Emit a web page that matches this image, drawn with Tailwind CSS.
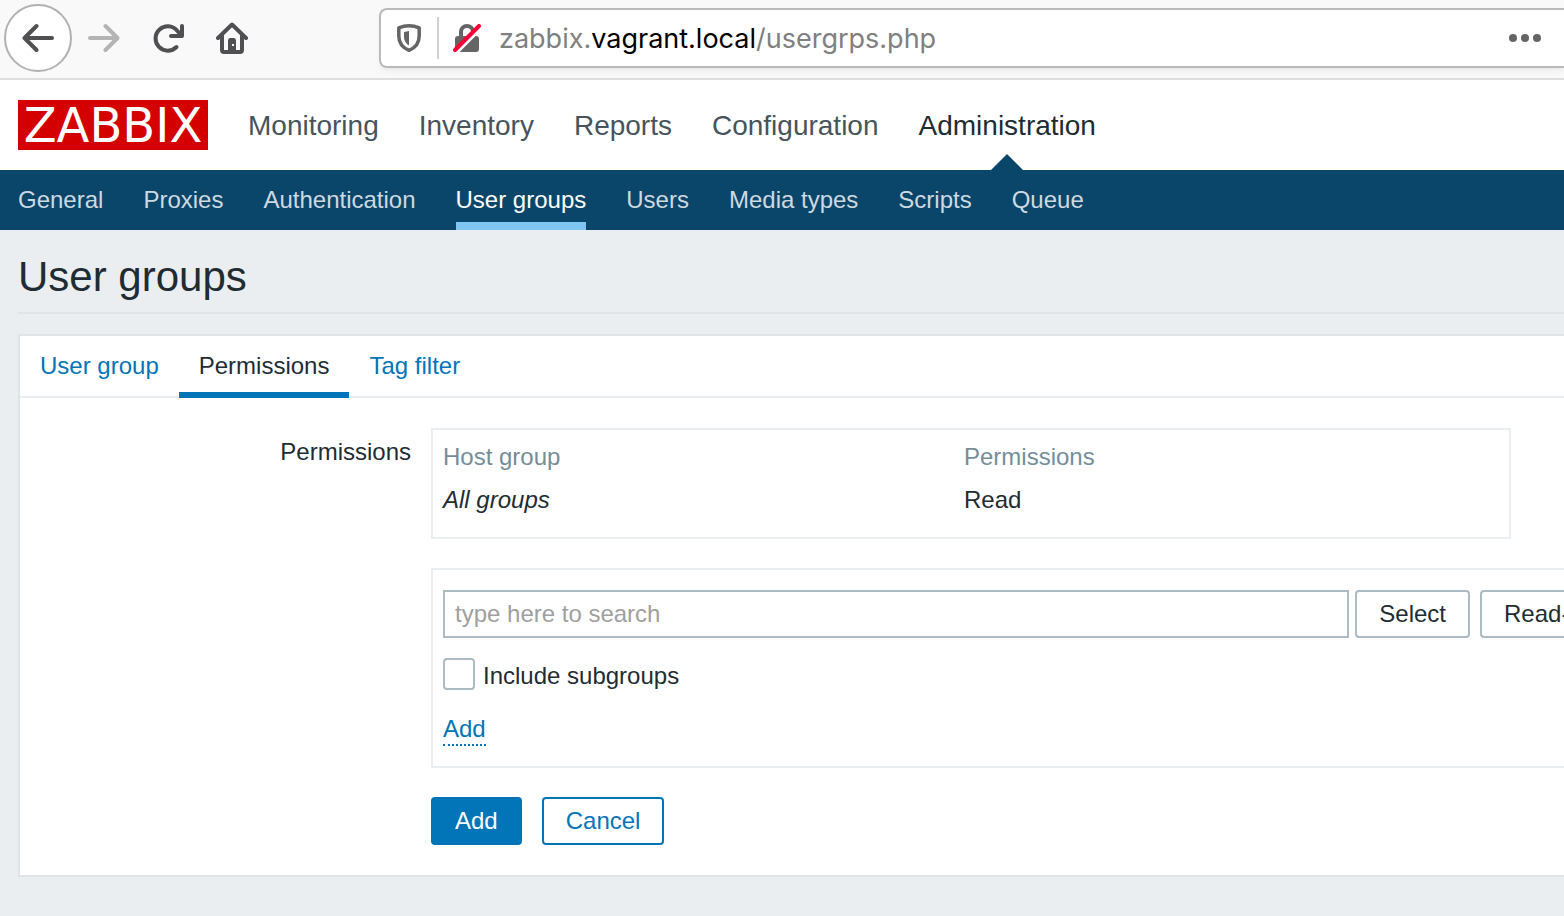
<!DOCTYPE html>
<html lang="en">
<head>
<meta charset="utf-8">
<meta name="viewport" content="width=device-width, initial-scale=1">
<title>User groups</title>
<script src="https://cdn.jsdelivr.net/npm/@tailwindcss/browser@4"></script>
</head>
<body class="min-h-screen overflow-x-hidden bg-[#ebeef0] font-['Liberation_Sans',Arial,sans-serif] text-2xl leading-7 text-[#1f2c33]">

<!-- Browser toolbar -->
<div class="flex h-20 border-b-2 border-[#dedede] bg-[#f9f9fa] pt-1 pl-1">
  <button type="button" aria-label="Back" class="flex size-17 shrink-0 items-center justify-center rounded-full border-2 border-[#b1b1b3] bg-white">
    <svg class="size-8" viewBox="0 0 32 32" fill="none" stroke="#505052" stroke-width="4" stroke-linecap="round" stroke-linejoin="round"><path d="M30 16H3M14.500 4L2.500 16L14.500 28"/></svg>
  </button>
  <button type="button" aria-label="Forward" class="ml-4 flex h-17 w-8 shrink-0 items-center justify-center">
    <svg class="size-8" viewBox="0 0 32 32" fill="none" stroke="#b4b4b5" stroke-width="4" stroke-linecap="round" stroke-linejoin="round"><path d="M2 16H29M17.500 4L29.500 16L17.500 28"/></svg>
  </button>
  <button type="button" aria-label="Reload" class="ml-8 flex h-17 w-8 shrink-0 items-center justify-center">
    <svg class="size-8" viewBox="0 0 32 32" fill="none" stroke="#505052" stroke-width="4" stroke-linecap="round" stroke-linejoin="round"><path d="M24.500 25A12.200 12.200 0 1 1 25 8.500L29 13"/><path d="M30 4V14H19"/></svg>
  </button>
  <button type="button" aria-label="Home" class="ml-8 flex h-17 w-8 shrink-0 items-center justify-center">
    <svg class="size-8" viewBox="0 0 32 32" fill="none" stroke="#505052" stroke-width="4" stroke-linecap="round" stroke-linejoin="round"><path d="M2 16L16 2.500L30 16"/><path d="M6 14V28Q6 30 8 30H24Q26 30 26 28V14"/><path fill="#505052" stroke="none" fill-rule="evenodd" d="M12 30V18.500Q12 16 14 16H18Q20 16 20 18.500V30ZM16 22V24H18V22Z"/></svg>
  </button>
  <div class="mt-1 ml-[131px] flex h-15 min-w-0 flex-1 items-center rounded-l-lg border-2 border-r-0 border-[#bababb] bg-white pl-4 shadow-md shadow-black/5">
    <svg class="h-7 w-6 shrink-0" viewBox="0 0 24 28"><path d="M12 1.800C15.500 1.800 19 2.500 22.200 3.800V12C22.200 18.500 19 23.500 12 26.300C5 23.500 1.800 18.500 1.800 12V3.800C5 2.500 8.500 1.800 12 1.800Z" fill="none" stroke="#656566" stroke-width="3.500" stroke-linejoin="round"/><path d="M12 7L7 8V13C7 17 9 19.500 12 21.500Z" fill="#656566"/></svg>
    <span class="ml-4 h-[42px] w-0.5 shrink-0 bg-[#d0d0d1]"></span>
    <svg class="ml-3.5 size-7 shrink-0" viewBox="0 0 28 28"><path d="M8 13V8A6 6 0 0 1 20 8V13" fill="none" stroke="#656566" stroke-width="4"/><rect x="2" y="12" width="24" height="16" rx="3" fill="#656566"/><path d="M2.500 30L30 2.500" stroke="#fff" stroke-width="3"/><path d="M2 26L26 2" stroke="#ff0039" stroke-width="4" stroke-linecap="round"/></svg>
    <div class="ml-4.5 min-w-0 flex-1 truncate pt-0.5 font-[Inter,sans-serif] text-[27px] leading-9 text-[#808081]">zabbix.<span class="text-black">vagrant.local</span>/usergrps.php</div>
    <button type="button" aria-label="Page actions" class="mr-[23px] flex h-8 shrink-0 items-center gap-1">
      <span class="size-2 rounded-full bg-[#656566]"></span><span class="size-2 rounded-full bg-[#656566]"></span><span class="size-2 rounded-full bg-[#656566]"></span>
    </button>
  </div>
</div>

<!-- Main menu -->
<header>
  <div class="flex h-[90px] items-center bg-white pl-4.5">
    <a href="#" class="flex h-[50px] w-[190px] shrink-0 items-center justify-center bg-[#d40000] font-['DejaVu_Sans',sans-serif] text-[48px] leading-[50px] text-white">ZABBIX</a>
    <nav aria-label="Main" class="ml-10 flex h-full items-center gap-10 text-[28px] leading-[90px] text-[#47545c]">
      <a href="#" class="pt-0.5">Monitoring</a>
      <a href="#" class="pt-0.5">Inventory</a>
      <a href="#" class="pt-0.5">Reports</a>
      <a href="#" class="pt-0.5">Configuration</a>
      <a href="#" aria-current="page" class="relative flex h-full items-center pt-0.5 text-[#1f2c33]">Administration
        <svg class="absolute bottom-0 left-1/2 h-4 w-8 -translate-x-1/2" viewBox="0 0 32 16"><path d="M0 16L16 0L32 16Z" fill="#0a466a"/></svg>
      </a>
    </nav>
  </div>
  <nav aria-label="Administration" class="flex h-15 items-stretch gap-10 bg-[#0a466a] pl-4.5 leading-[60px] whitespace-nowrap text-[#ced9e0]">
    <a href="#">General</a>
    <a href="#">Proxies</a>
    <a href="#">Authentication</a>
    <a href="#" aria-current="page" class="border-b-8 border-[#7fc6f2] text-white">User groups</a>
    <a href="#">Users</a>
    <a href="#">Media types</a>
    <a href="#">Scripts</a>
    <a href="#">Queue</a>
  </nav>
</header>

<main class="pb-10 pl-4.5">
  <h1 class="border-b-2 border-[#dfe4e7] pt-[23px] pb-[11px] text-[42px] leading-12">User groups</h1>

  <form class="mt-5 border-2 border-r-0 border-[#dfe4e7] bg-white pb-[30px]">
    <div role="tablist" class="flex h-[62px] border-b-2 border-[#ebeef0] text-[#0275b8]">
      <a href="#" role="tab" class="px-5 leading-[60px]">User group</a>
      <a href="#" role="tab" aria-selected="true" class="h-[62px] border-b-6 border-[#0275b8] px-5 leading-[60px] text-[#1f2c33]">Permissions</a>
      <a href="#" role="tab" class="px-5 leading-[60px]">Tag filter</a>
    </div>

    <div class="mt-[30px] flex">
      <div id="perm-label" class="w-[391px] shrink-0 pt-2.5 text-right">Permissions</div>
      <div class="ml-5 min-w-0 flex-1">
        <div class="mr-[53px] border-2 border-[#ebeef0] px-2.5 pt-[5px] pb-4">
          <table aria-labelledby="perm-label" class="w-full table-fixed text-left">
            <thead>
              <tr class="h-[43px] text-[#768d99]"><th class="w-[521px] font-normal">Host group</th><th class="font-normal">Permissions</th></tr>
            </thead>
            <tbody>
              <tr class="h-[43px]"><td class="italic">All groups</td><td>Read</td></tr>
            </tbody>
          </table>
        </div>

        <div class="mt-[29px] border-2 border-r-0 border-[#ebeef0] pt-5 pb-5 pl-2.5">
          <div class="flex items-start">
            <input type="text" aria-label="Host groups" placeholder="type here to search" class="h-12 min-w-0 flex-1 border-2 border-[#acbbc2] bg-white px-2.5 placeholder:text-[#9f9f9f]">
            <button type="button" class="ml-1.5 h-12 shrink-0 rounded border-2 border-[#acbbc2] px-[22px]">Select</button>
            <button type="button" class="ml-2.5 h-12 w-21 shrink-0 overflow-hidden rounded-l border-2 border-r-0 border-[#acbbc2] pl-[22px] text-left whitespace-nowrap">Read-</button>
          </div>
          <div class="mt-5 flex h-8 items-center gap-2">
            <input id="subgroups" type="checkbox" class="size-8 appearance-none rounded border-2 border-[#acbbc2] bg-white checked:bg-[#0275b8]">
            <label for="subgroups" class="pt-1">Include subgroups</label>
          </div>
          <div class="mt-6 flex">
            <button type="button" class="h-8 border-b-2 border-dotted border-[#0275b8] text-[#0275b8]">Add</button>
          </div>
        </div>

        <div class="mt-[29px] flex gap-5">
          <button type="submit" class="h-12 rounded border-2 border-[#0275b8] bg-[#0275b8] px-[22px] text-white">Add</button>
          <button type="button" class="h-12 rounded border-2 border-[#0275b8] bg-white px-[22px] text-[#0275b8]">Cancel</button>
        </div>
      </div>
    </div>
  </form>
</main>
</body>
</html>
